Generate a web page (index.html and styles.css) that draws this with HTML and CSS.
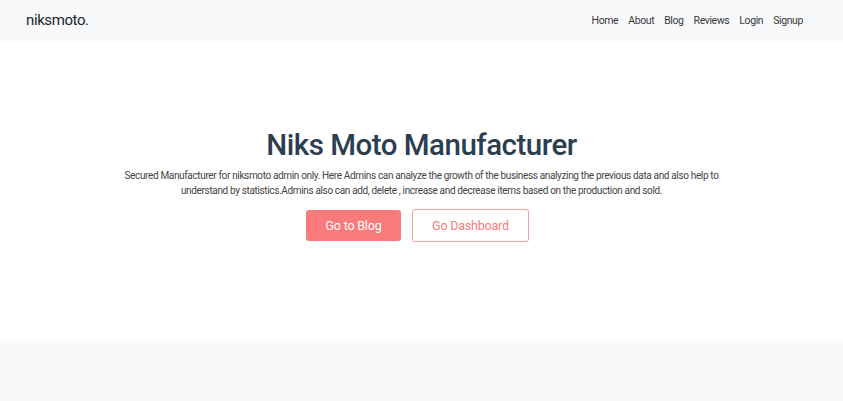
FILE: index.html
```html
<!DOCTYPE html>
<html>
<head>
<meta charset="utf-8">
<link rel="stylesheet" href="styles.css">
</head>
<body>
<header class="navbar">
  <a class="brand" href="#">niksmoto.</a>
  <nav class="links">
    <a href="#">Home</a>
    <a href="#">About</a>
    <a href="#">Blog</a>
    <a href="#">Reviews</a>
    <a href="#">Login</a>
    <a href="#">Signup</a>
  </nav>
</header>
<section class="hero">
  <h1 class="title">Niks Moto Manufacturer</h1>
  <p class="lead">Secured Manufacturer for niksmoto admin only. Here Admins can analyze the growth of the business analyzing the previous data and also help to understand by statistics.Admins also can add, delete , increase and decrease items based on the production and sold.</p>
  <div class="actions">
    <a class="btn btn-fill" href="#">Go to Blog</a>
    <a class="btn btn-outline" href="#">Go Dashboard</a>
  </div>
</section>
<section class="after"></section>
</body>
</html>
```
FILE: styles.css
```css
* { box-sizing: border-box; }
html, body { margin: 0; padding: 0; }
body {
  font-family: Roboto, "Liberation Sans", sans-serif;
  background: #f8f9fa;
  color: #333;
}
a { text-decoration: none; color: inherit; }
.navbar {
  height: 41px;
  background: #f8f9fa;
  display: flex;
  align-items: center;
  justify-content: space-between;
  padding: 0 40px 0 26px;
}
.brand {
  font-size: 15px;
  letter-spacing: -0.4px;
  color: #212529;
  margin-top: -1px;
}
.links {
  display: flex;
  gap: 10px;
  font-size: 10.5px;
  letter-spacing: -0.4px;
  color: #3a3a3a;
}
.hero {
  background: #fff;
  height: 299px;
  display: flex;
  flex-direction: column;
  align-items: center;
  padding-top: 84px;
}
.title {
  margin: 0;
  font-size: 29.5px;
  letter-spacing: -0.5px;
  font-weight: 500;
  color: #2c3e50;
  line-height: 40px;
}
.lead {
  margin: 3px 0 0;
  width: 610px;
  text-align: center;
  font-size: 10px;
  letter-spacing: -0.35px;
  line-height: 15px;
  color: #444;
}
.actions {
  display: flex;
  gap: 11px;
  margin-top: 11px;
  padding-right: 8px;
}
.btn {
  height: 33px;
  display: flex;
  align-items: center;
  justify-content: center;
  font-size: 12.5px;
  letter-spacing: -0.2px;
  border-radius: 3px;
}
.btn-fill {
  background: #f77b7b;
  color: #fff;
  width: 95px;
  height: 31px;
  margin-top: 1px;
}
.btn-outline {
  border: 1px solid #f7a0a0;
  color: #f47c7c;
  width: 117px;
  background: #fff;
}
.after {
  height: 61px;
  background: #f8f9fa;
}
```
